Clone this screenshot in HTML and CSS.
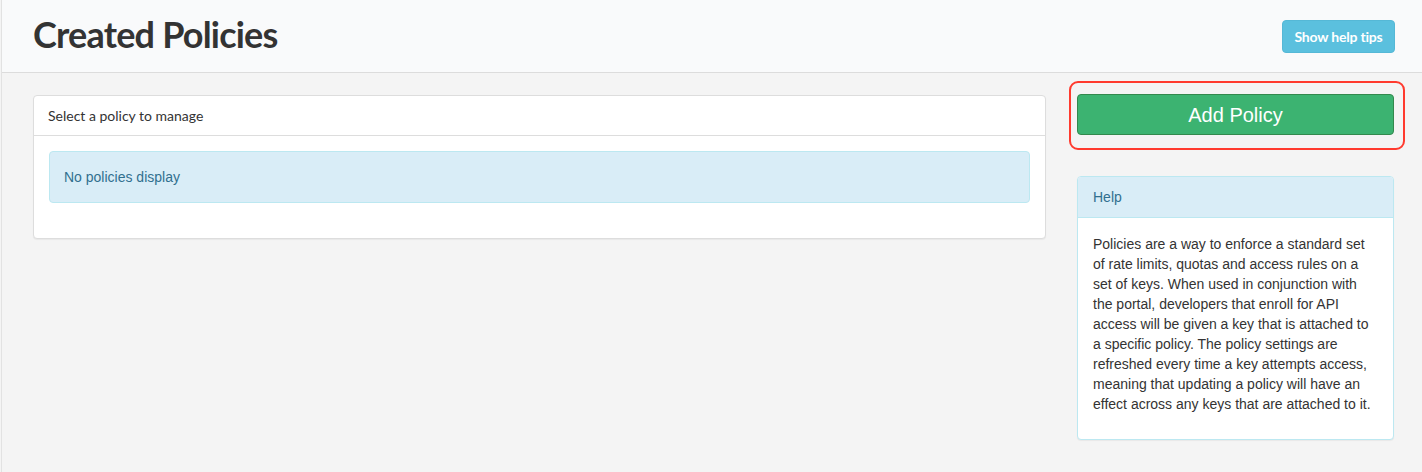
FILE: index.html
```html
<!DOCTYPE html>
<html>
<head>
<meta charset="utf-8">
<link rel="stylesheet" href="styles.css">
</head>
<body>
<div class="page">
  <header class="page-header">
    <h1 class="title">Created Policies</h1>
    <button class="btn-tips">Show help tips</button>
  </header>
  <main class="content">
    <section class="main-col">
      <div class="panel">
        <div class="panel-heading">Select a policy to manage</div>
        <div class="panel-body">
          <div class="alert">No policies display</div>
        </div>
      </div>
    </section>
    <aside class="side-col">
      <div class="highlight">
        <button class="btn-add">Add Policy</button>
      </div>
      <div class="help-panel">
        <div class="help-heading">Help</div>
        <div class="help-body">
          <p>Policies are a way to enforce a standard set of rate limits, quotas and access rules on a set of keys. When used in conjunction with the portal, developers that enroll for API access will be given a key that is attached to a specific policy. The policy settings are refreshed every time a key attempts access, meaning that updating a policy will have an effect across any keys that are attached to it.</p>
        </div>
      </div>
    </aside>
  </main>
</div>
</body>
</html>
```

FILE: styles.css
```css
html, body {
  margin: 0;
  padding: 0;
  background: #f4f4f4;
  height: 100%;
}
body {
  font-family: "Liberation Sans", Arial, sans-serif;
  font-size: 14px;
  color: #333;
  padding-left: 1px;
  box-sizing: border-box;
}
.page {
  border-left: 1px solid #e2e2e2;
  min-height: 472px;
  box-sizing: border-box;
}
.page-header {
  background: #f9fafb;
  border-bottom: 1px solid #dcdcdc;
  height: 73px;
  box-sizing: border-box;
  display: flex;
  align-items: flex-start;
  justify-content: space-between;
  padding: 0 27px 0 31px;
}
.title {
  margin: 12px 0 0 0;
  font-family: Lato, "Open Sans", sans-serif;
  font-weight: 700;
  font-size: 36px;
  line-height: 44px;
  color: #333;
  letter-spacing: -0.8px;
}
.btn-tips {
  margin-top: 20px;
  width: 113px;
  height: 33px;
  background: #5bc0de;
  border: 1px solid #55b8d6;
  border-radius: 4px;
  color: #fff;
  font-family: Lato, "Open Sans", sans-serif;
  font-weight: 700;
  font-size: 14px;
  letter-spacing: -0.2px;
  padding: 0;
}
.content {
  display: flex;
  gap: 31px;
  padding: 22px 28px 0 31px;
  align-items: flex-start;
}
.main-col {
  width: 1013px;
}
.side-col {
  width: 317px;
  display: flex;
  flex-direction: column;
}
.panel {
  background: #fff;
  border: 1px solid #dddddd;
  border-radius: 4px;
  box-shadow: 0 1px 1px rgba(0,0,0,0.05);
}
.panel-heading {
  height: 40px;
  box-sizing: border-box;
  padding: 11px 14px 0 14px;
  border-bottom: 1px solid #dddddd;
  font-family: Lato, "Open Sans", sans-serif;
  font-size: 14px;
  color: #333;
}
.panel-body {
  padding: 15px 15px;
}
.alert {
  background: #d9edf7;
  border: 1px solid #bce8f1;
  border-radius: 4px;
  color: #31708f;
  padding: 15px 14px;
  line-height: 20px;
  margin-bottom: 20px;
}
.highlight {
  border: 2px solid #ff3a2e;
  border-radius: 9px;
  padding: 11px 9px 13px 6px;
  margin: -14px -11px 0 -8px;
}
.btn-add {
  width: 100%;
  height: 41px;
  background: #3cb371;
  border: 1px solid #33894d;
  border-radius: 4px;
  color: #fff;
  font-family: "Liberation Sans", Arial, sans-serif;
  font-size: 20px;
  padding: 2px 0 0 0;
  display: block;
}
.help-panel {
  margin-top: 26px;
  background: #fff;
  border: 1px solid #bce8f1;
  border-radius: 4px;
  box-shadow: 0 1px 1px rgba(0,0,0,0.05);
}
.help-heading {
  height: 41px;
  box-sizing: border-box;
  padding: 12px 15px 0 15px;
  background: #d9edf7;
  border-bottom: 1px solid #bce8f1;
  color: #31708f;
  font-size: 14px;
  border-radius: 3px 3px 0 0;
}
.help-body {
  padding: 16px 15px 15px 15px;
}
.help-body p {
  margin: 0 0 10px 0;
  line-height: 20px;
  font-size: 14px;
  color: #333;
}
```
